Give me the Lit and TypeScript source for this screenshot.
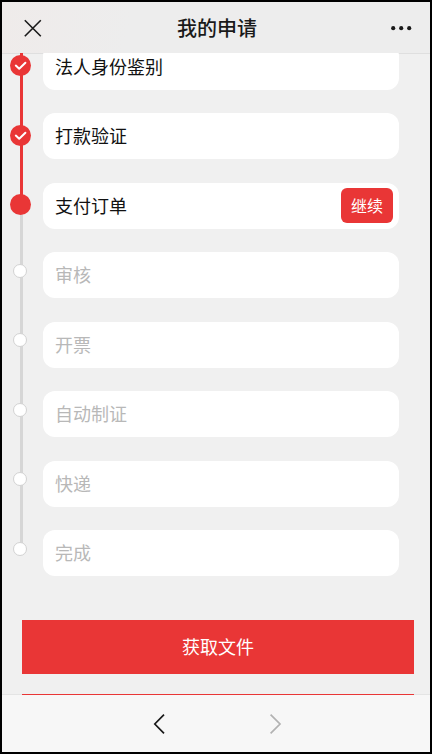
import { LitElement, html, css, nothing } from "lit";
import { customElement, property } from "lit/decorators.js";
import { classMap } from "lit/directives/class-map.js";

type Status = "done" | "current" | "pending";

interface Step {
  label: string;
  status: Status;
}

const STEPS: Step[] = [
  { label: "法人身份鉴别", status: "done" },
  { label: "打款验证", status: "done" },
  { label: "支付订单", status: "current" },
  { label: "审核", status: "pending" },
  { label: "开票", status: "pending" },
  { label: "自动制证", status: "pending" },
  { label: "快递", status: "pending" },
  { label: "完成", status: "pending" },
];

@customElement("step-list")
class StepList extends LitElement {
  @property({ attribute: false }) steps: Step[] = [];

  static styles = css`
    :host {
      display: flex;
      flex-direction: column;
    }
    .steps {
      flex: 1;
      display: flex;
      flex-direction: column;
      margin: 0;
      padding: 0;
      list-style: none;
    }
    .step {
      flex: 1;
      display: flex;
      align-items: center;
      gap: 12px;
      color: #111;
    }
    .step.pending {
      color: #b8b8b8;
    }
    .rail {
      position: relative;
      align-self: stretch;
      width: 21px;
      display: flex;
      align-items: center;
    }
    .rail::before,
    .rail::after {
      content: "";
      position: absolute;
      left: 10px;
      width: 3px;
      height: 50%;
      background: #d6d6d6;
    }
    .rail::before {
      top: 0;
    }
    .rail::after {
      bottom: 0;
    }
    .done .rail::before,
    .done .rail::after,
    .current .rail::before {
      background: #e93636;
    }
    .step:last-child .rail::after {
      display: none;
    }
    .dot {
      position: relative;
      z-index: 1;
      box-sizing: border-box;
      display: flex;
      width: 21px;
      height: 21px;
      margin-bottom: 2px;
      border-radius: 50%;
      background: #e93636;
    }
    .pending .dot {
      width: 14px;
      height: 14px;
      margin: 0 0 9px 3px;
      border: 1px solid #d2d2d2;
      background: #fff;
    }
    .card {
      flex: 1;
      box-sizing: border-box;
      min-height: 46px;
      display: flex;
      align-items: center;
      justify-content: space-between;
      padding: 0 6px 0 12px;
      border-radius: 12px;
      background: #fff;
      font-size: 18px;
      line-height: 26px;
    }
    .label {
      padding-bottom: 2px;
    }
    .resume {
      width: 52px;
      height: 35px;
      padding: 0 0 2px;
      border: 0;
      border-radius: 6px;
      background: #e93636;
      color: #fff;
      font: inherit;
      font-size: 16px;
    }
  `;

  render() {
    return html`
      <ol class="steps">
        ${this.steps.map(
          (s) => html`
            <li class=${classMap({ step: true, [s.status]: true })}>
              <span class="rail">
                <span class="dot">
                  ${s.status === "done"
                    ? html`<svg width="21" height="21" viewBox="0 0 21 21" fill="none" aria-hidden="true">
                        <path
                          d="M5.8 10.6 9.2 13.8 15.4 7.8"
                          stroke="#fff"
                          stroke-width="2"
                          stroke-linecap="round"
                          stroke-linejoin="round"
                        />
                      </svg>`
                    : nothing}
                </span>
              </span>
              <div class="card">
                <span class="label">${s.label}</span>
                ${s.status === "current"
                  ? html`<button class="resume" type="button">继续</button>`
                  : nothing}
              </div>
            </li>
          `
        )}
      </ol>
    `;
  }
}

@customElement("app-root")
class AppRoot extends LitElement {
  static styles = css`
    :host {
      display: flex;
      flex-direction: column;
      box-sizing: border-box;
      height: calc(100vh - 1px);
      margin: 0 1px 1px 0;
      border: 2px solid #000;
      background: #f0f0f0;
      font-family: "Noto Sans CJK SC", sans-serif;
    }
    button {
      padding: 0;
      border: 0;
      background: none;
      color: inherit;
      font: inherit;
    }
    svg {
      display: block;
    }
    .bar {
      flex: none;
      display: grid;
      grid-template-columns: 1fr auto 1fr;
      align-items: center;
      height: 51px;
      padding: 0 18px 0 20px;
      background: linear-gradient(100deg, #efebea, #ededed 30%);
      color: #1a1a1a;
    }
    .title {
      margin: 0;
      font-size: 20px;
      font-weight: 500;
      line-height: 28px;
    }
    .more {
      justify-self: end;
    }
    .content {
      flex: 1;
      min-height: 0;
      display: flex;
      flex-direction: column;
      overflow: hidden;
      box-shadow: inset 0 1px #dfdfdf, inset 0 -1px #e4e4e4;
    }
    .progress {
      flex: 1;
      margin: -21px 31px 0 8px;
    }
    .actions {
      flex: none;
      display: flex;
      flex-direction: column;
      gap: 20px;
      padding: 32px 16px 0 20px;
      margin-bottom: -53px;
    }
    .action {
      height: 54px;
      padding-bottom: 2px;
      background: #e93636;
      color: #fff;
      font-size: 18px;
    }
    .nav {
      flex: none;
      display: flex;
      align-items: center;
      justify-content: center;
      gap: 94px;
      height: 57px;
      padding-left: 2px;
      background: #f7f7f7;
      color: #1a1a1a;
    }
    .nav button:disabled {
      color: #b2b2b2;
    }
  `;

  render() {
    return html`
      <header class="bar">
        <button type="button" aria-label="关闭">
          <svg width="22" height="22" viewBox="0 0 22 22" fill="none" stroke="currentColor" stroke-width="1.6">
            <path d="M2.8 3.3 18.8 19.3M18.8 3.3 2.8 19.3" />
          </svg>
        </button>
        <h1 class="title">我的申请</h1>
        <button class="more" type="button" aria-label="更多">
          <svg width="22" height="22" viewBox="1 0 22 22" fill="currentColor">
            <circle cx="4.2" cy="11.2" r="2.1" />
            <circle cx="12.2" cy="11.2" r="2.1" />
            <circle cx="20.2" cy="11.2" r="2.1" />
          </svg>
        </button>
      </header>
      <main class="content">
        <step-list class="progress" .steps=${STEPS}></step-list>
        <div class="actions">
          <button class="action" type="button">获取文件</button>
          <button class="action" type="button" aria-label="更多操作"></button>
        </div>
      </main>
      <nav class="nav">
        <button type="button" aria-label="后退">
          <svg width="22" height="24" viewBox="0 0 22 24" fill="none" stroke="currentColor" stroke-width="1.7">
            <path d="M16 2.6 6.8 12 16 21.4" />
          </svg>
        </button>
        <button type="button" aria-label="前进" disabled>
          <svg width="22" height="24" viewBox="0 0 22 24" fill="none" stroke="currentColor" stroke-width="1.7">
            <path d="M6.6 2.6 16 12 6.6 21.4" />
          </svg>
        </button>
      </nav>
    `;
  }
}
